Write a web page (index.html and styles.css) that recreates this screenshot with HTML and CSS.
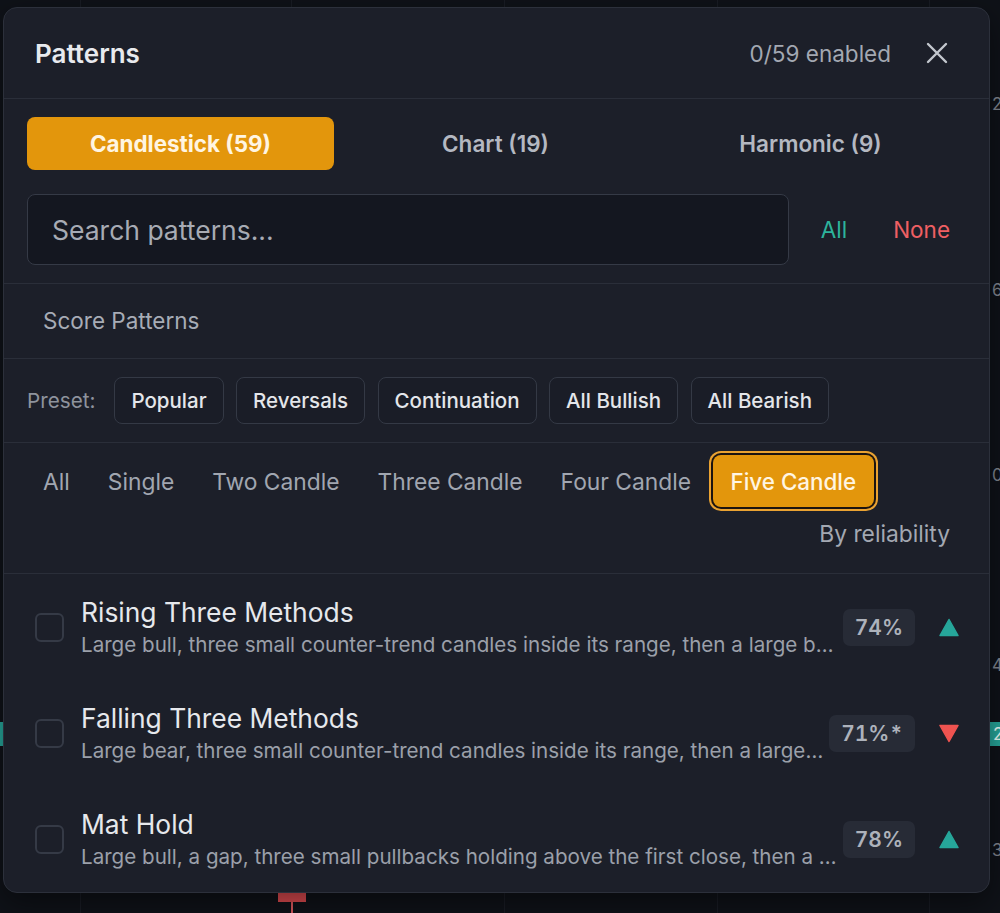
FILE: index.html
```html
<!DOCTYPE html>
<html lang="en">
<head>
    <meta charset="UTF-8">
    <meta name="viewport" content="width=device-width, initial-scale=1.0">
    <title>Patterns</title>
    <link rel="stylesheet" href="styles.css">
</head>
<body>
    <div class="chart">
        <!-- chart behind the dialog -->
        <div class="grid-line g1"></div>
        <div class="grid-line g2"></div>
        <div class="grid-line g3"></div>
        <div class="grid-line g4"></div>
        <div class="grid-line g5"></div>
        <span class="axis-label a1">24,800</span>
        <span class="axis-label a2">64,600</span>
        <span class="axis-label a3">04,400</span>
        <span class="axis-label a4">44,200</span>
        <span class="axis-label price">24,180</span>
        <span class="axis-label a5">34,000</span>
        <div class="price-tag"></div>
        <div class="candle"></div>

        <div class="panel">
            <header class="panel-header">
                <h2>Patterns</h2>
                <div class="header-right">
                    <span class="count">0/59 enabled</span>
                    <button class="close" aria-label="Close">
                        <svg width="22" height="22" viewBox="0 0 22 22" fill="none" stroke="currentColor" stroke-width="2.4" stroke-linecap="round">
                            <path d="M2 2 L20 20 M20 2 L2 20"/>
                        </svg>
                    </button>
                </div>
            </header>

            <div class="top-section">
                <div class="tabs">
                    <button class="tab active">Candlestick (59)</button>
                    <button class="tab">Chart (19)</button>
                    <button class="tab">Harmonic (9)</button>
                </div>
                <div class="search-row">
                    <input class="search" type="text" placeholder="Search patterns...">
                    <button class="link link-all">All</button>
                    <button class="link link-none">None</button>
                </div>
            </div>

            <div class="score-row">Score Patterns</div>

            <div class="preset-row">
                <span class="preset-label">Preset:</span>
                <button class="preset">Popular</button>
                <button class="preset">Reversals</button>
                <button class="preset">Continuation</button>
                <button class="preset">All Bullish</button>
                <button class="preset">All Bearish</button>
            </div>

            <div class="filter-section">
                <div class="filters">
                    <button class="filter">All</button>
                    <button class="filter">Single</button>
                    <button class="filter">Two Candle</button>
                    <button class="filter">Three Candle</button>
                    <button class="filter">Four Candle</button>
                    <button class="filter active">Five Candle</button>
                </div>
                <div class="sort-row">
                    <button class="sort">By reliability</button>
                </div>
            </div>

            <ul class="list">
                <li class="item">
                    <span class="checkbox"></span>
                    <div class="item-text">
                        <div class="item-title">Rising Three Methods</div>
                        <div class="item-desc">Large bull, three small counter-trend candles inside its range, then a large bull close above the first high.</div>
                    </div>
                    <span class="badge">74%</span>
                    <svg class="dir" width="20" height="19" viewBox="0 0 20 19">
                        <path d="M10 1.5 L19 17.5 L1 17.5 Z" fill="#26a69a" stroke="#26a69a" stroke-width="1.5" stroke-linejoin="round"/>
                    </svg>
                </li>
                <li class="item">
                    <span class="checkbox"></span>
                    <div class="item-text">
                        <div class="item-title">Falling Three Methods</div>
                        <div class="item-desc">Large bear, three small counter-trend candles inside its range, then a large bear close below the first low.</div>
                    </div>
                    <span class="badge">71%*</span>
                    <svg class="dir" width="20" height="19" viewBox="0 0 20 19">
                        <path d="M1 1.5 L19 1.5 L10 17.5 Z" fill="#ef5350" stroke="#ef5350" stroke-width="1.5" stroke-linejoin="round"/>
                    </svg>
                </li>
                <li class="item">
                    <span class="checkbox"></span>
                    <div class="item-text">
                        <div class="item-title">Mat Hold</div>
                        <div class="item-desc">Large bull, a gap, three small pullbacks holding above the first close, then a large bull breakout.</div>
                    </div>
                    <span class="badge">78%</span>
                    <svg class="dir" width="20" height="19" viewBox="0 0 20 19">
                        <path d="M10 1.5 L19 17.5 L1 17.5 Z" fill="#26a69a" stroke="#26a69a" stroke-width="1.5" stroke-linejoin="round"/>
                    </svg>
                </li>
            </ul>
        </div>
    </div>
</body>
</html>
```

FILE: styles.css
```css
* {
    margin: 0;
    padding: 0;
    box-sizing: border-box;
    font-family: 'Inter', 'Noto Sans', sans-serif;
}

body {
    background: #0f1218;
    width: 1000px;
    height: 913px;
    overflow: hidden;
}

button {
    background: none;
    border: none;
    cursor: pointer;
    font: inherit;
}

/* chart backdrop */
.chart {
    position: relative;
    width: 1000px;
    height: 913px;
    overflow: hidden;
}

.grid-line {
    position: absolute;
    top: 0;
    bottom: 0;
    width: 1px;
    background: #191c24;
}

.g1 { left: 80px; }
.g2 { left: 291px; }
.g3 { left: 504px; }
.g4 { left: 717px; }
.g5 { left: 929px; }

.axis-label {
    position: absolute;
    left: 992px;
    font-size: 17px;
    color: #80858f;
    white-space: nowrap;
}

.a1 { top: 94px; }
.a2 { top: 280px; }
.a3 { top: 465px; }
.a4 { top: 655px; }
.a5 { top: 840px; }

.price {
    top: 722px;
    left: 990px;
    padding: 0 3px;
    height: 24px;
    line-height: 24px;
    background: #26a69a;
    color: #eafff9;
}

.price-tag {
    position: absolute;
    left: 0;
    top: 722px;
    width: 4px;
    height: 24px;
    background: #26a69a;
}

.candle {
    position: absolute;
    left: 278px;
    top: 890px;
    width: 28px;
    height: 12px;
    background: #dc4a4f;
}

.candle::after {
    content: "";
    position: absolute;
    left: 13px;
    top: 12px;
    width: 2px;
    height: 14px;
    background: #d9575c;
}

/* dialog */
.panel {
    position: absolute;
    left: 3px;
    top: 7px;
    width: 987px;
    height: 886px;
    display: flex;
    flex-direction: column;
    background: #1c1f29;
    border: 1px solid #2c303b;
    border-radius: 14px;
    overflow: hidden;
    box-shadow: 0 10px 30px rgba(0, 0, 0, 0.45);
}

.panel-header {
    display: flex;
    justify-content: space-between;
    align-items: center;
    height: 91px;
    flex-shrink: 0;
    padding: 0 41px 0 31px;
    border-bottom: 1px solid #2a2e39;
}

.panel-header h2 {
    font-size: 26px;
    font-weight: 600;
    color: #e8eaee;
}

.header-right {
    display: flex;
    align-items: center;
    gap: 35px;
}

.count {
    font-size: 22.5px;
    color: #a3a8b2;
}

.close {
    display: flex;
    color: #c3c7ce;
}

.top-section {
    padding: 18px 25px 18px 23px;
    border-bottom: 1px solid #2a2e39;
}

.tabs {
    display: grid;
    grid-template-columns: repeat(3, 1fr);
    gap: 8px;
}

.tab {
    height: 53px;
    border-radius: 8px;
    font-size: 22.5px;
    font-weight: 600;
    color: #b4b8c1;
}

.tab.active {
    background: #e3960c;
    color: #fff5e2;
    font-size: 22.4px;
    font-weight: 700;
}

.search-row {
    display: flex;
    align-items: center;
    gap: 18px;
    margin-top: 24px;
}

.search {
    flex: 1;
    height: 71px;
    padding: 0 24px;
    background: #141720;
    border: 1px solid #353a46;
    border-radius: 8px;
    font-size: 26.5px;
    color: #e8eaee;
    outline: none;
}

.search::placeholder {
    color: #a7abb4;
}

.link {
    padding: 0 14px;
    font-size: 22.5px;
}

.link-all {
    color: #2db39c;
}

.link-none {
    color: #ef5f63;
}

.score-row {
    display: flex;
    align-items: center;
    height: 75px;
    flex-shrink: 0;
    padding: 0 0 2px 39px;
    font-size: 22.5px;
    color: #a7acb6;
    border-bottom: 1px solid #2a2e39;
}

.preset-row {
    display: flex;
    align-items: center;
    gap: 12.5px;
    height: 84px;
    flex-shrink: 0;
    padding: 0 23px;
    border-bottom: 1px solid #2a2e39;
}

.preset-label {
    font-size: 20.7px;
    color: #8e939d;
    margin-right: 6.5px;
}

.preset {
    height: 47px;
    padding: 0 16px;
    background: #1a1d27;
    border: 1px solid #343945;
    border-radius: 8px;
    font-size: 20.5px;
    font-weight: 500;
    color: #e4e6ea;
}

.filter-section {
    padding: 12px 25px 27px 23px;
    border-bottom: 1px solid #2a2e39;
    flex-shrink: 0;
}

.filters {
    display: flex;
    gap: 6px;
}

.filter {
    height: 52px;
    padding: 0 16px;
    border-radius: 8px;
    font-size: 22.8px;
    color: #a1a6b0;
}

.filter.active {
    padding: 0 17.5px;
    background: #e3960c;
    color: #fff5e2;
    font-weight: 500;
    font-size: 22.4px;
    box-shadow: 0 0 0 2px #1c1410, 0 0 0 4px #e9a232;
}

.sort-row {
    display: flex;
    justify-content: flex-end;
    margin-top: 15px;
}

.sort {
    padding: 0 14px;
    font-size: 22.8px;
    line-height: 24px;
    color: #a3a8b2;
}

.list {
    list-style: none;
}

.item {
    display: flex;
    align-items: center;
    padding: 21px 30px 21px 31px;
}

.checkbox {
    width: 29px;
    height: 29px;
    flex-shrink: 0;
    border: 2px solid #353a46;
    border-radius: 6px;
    margin-right: 17px;
}

.item-text {
    flex: 1;
    min-width: 0;
}

.item-title {
    font-size: 26.4px;
    line-height: 34px;
    color: #e6e8ec;
}

.item-desc {
    margin-top: 2px;
    font-size: 20.6px;
    line-height: 28px;
    color: #9ba0aa;
    white-space: nowrap;
    overflow: hidden;
    text-overflow: ellipsis;
}

.badge {
    flex-shrink: 0;
    margin-left: 3px;
    height: 37px;
    line-height: 37px;
    padding: 0 12px;
    background: #272b36;
    border-radius: 7px;
    font-size: 21px;
    font-weight: 600;
    font-variant-numeric: tabular-nums;
    color: #adb2bb;
}

.dir {
    flex-shrink: 0;
    margin-left: 24px;
}
```
